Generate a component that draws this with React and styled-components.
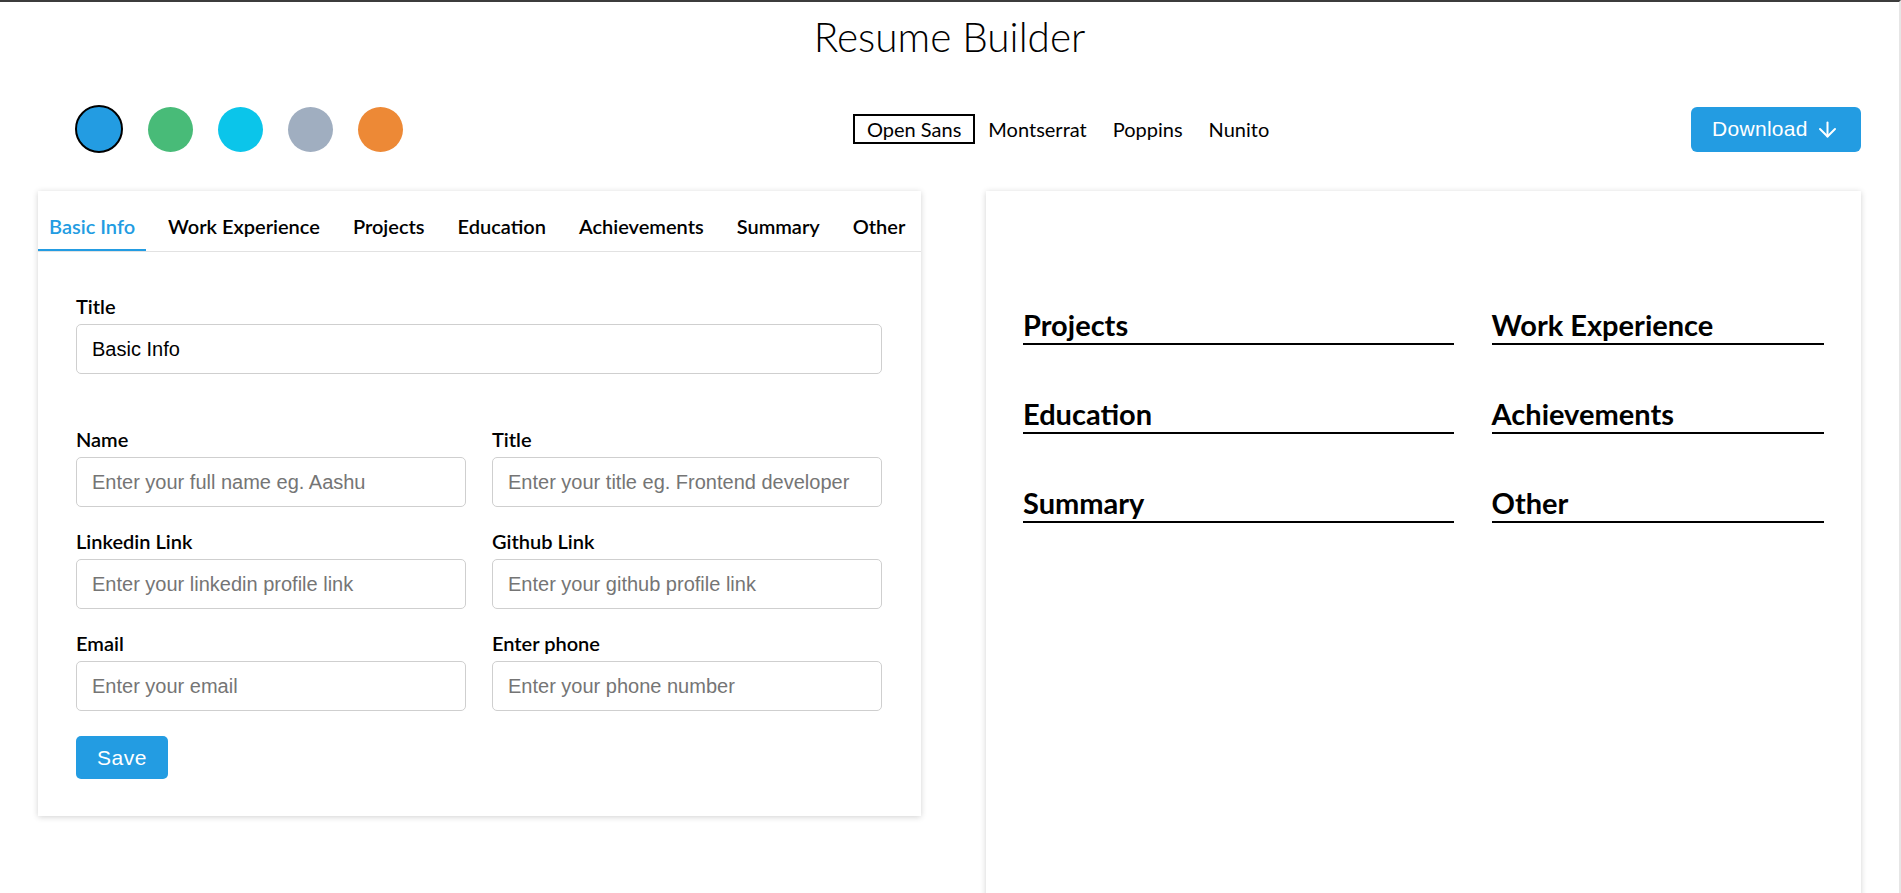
import React from "react";
import styled, { createGlobalStyle } from "styled-components";

const GlobalStyle = createGlobalStyle`
  html { scrollbar-width: none; }
  html::-webkit-scrollbar { display: none; }
  body {
    margin: 0;
    font-family: Lato, "Open Sans", sans-serif;
    color: #000;
    background: #fff;
  }
  * { box-sizing: border-box; }
`;

const BLUE = "#239ce2";

const Page = styled.div`
  border-top: 2px solid #3c3c3c;
  border-right: 2px solid #e6e6e6;
  min-height: 891px;
`;

const Heading = styled.h1`
  margin: 0;
  padding-top: 8px;
  text-align: center;
  font-family: Lato, sans-serif;
  font-weight: 300;
  font-size: 40.5px;
  line-height: 54px;
`;

const Toolbar = styled.div`
  display: flex;
  align-items: center;
  margin-top: 41px;
  padding: 0 38px 0 75px;
`;

const Swatches = styled.div`
  display: flex;
  align-items: center;
  gap: 25px;
`;

const Swatch = styled.span`
  display: block;
  width: ${(p) => (p.$active ? "48px" : "45px")};
  height: ${(p) => (p.$active ? "48px" : "45px")};
  border-radius: 50%;
  background: ${(p) => p.$color};
  border: ${(p) => (p.$active ? "2px solid #000" : "none")};
`;

const FontList = styled.div`
  display: flex;
  align-items: center;
  margin-left: 450px;
`;

const FontOption = styled.span`
  display: block;
  padding: 0 ${(p) => (p.$active ? "12px" : "11px")};
  border: 2px solid ${(p) => (p.$active ? "#000" : "transparent")};
  font-family: Lato, sans-serif;
  font-size: 20px;
  line-height: 26px;
`;

const DownloadButton = styled.button`
  margin-left: auto;
  display: flex;
  align-items: center;
  gap: 10px;
  height: 45px;
  width: 170px;
  padding: 0 0 0 21px;
  border: none;
  border-radius: 6px;
  background: ${BLUE};
  color: #fff;
  font-family: "Liberation Sans", Arial, sans-serif;
  font-size: 21px;
  letter-spacing: 0.3px;
`;

const Main = styled.div`
  display: grid;
  grid-template-columns: 883px 875px;
  justify-content: space-between;
  align-items: start;
  margin-top: 38px;
  padding: 0 38px 0 38px;
`;

const Card = styled.div`
  background: #fff;
  box-shadow: 0 1px 6px rgba(0, 0, 0, 0.18);
`;

const TabList = styled.div`
  display: flex;
  gap: 11px;
  border-bottom: 1px solid #e2e2e2;
`;

const Tab = styled.div`
  height: 60px;
  padding: 12px 11px 0;
  display: flex;
  align-items: center;
  border-bottom: 2px solid ${(p) => (p.$active ? BLUE : "transparent")};
  color: ${(p) => (p.$active ? BLUE : "#000")};
  font-size: 20px;
  font-weight: 600;
  white-space: nowrap;
`;

const FormBody = styled.div`
  padding: 42px 39px 37px 38px;
`;

const Field = styled.div`
  display: flex;
  flex-direction: column;
`;

const Label = styled.label`
  font-size: 20px;
  font-weight: 600;
  line-height: 24px;
  margin-bottom: 6px;
`;

const Input = styled.input`
  height: 50px;
  width: 100%;
  padding: 0 15px;
  border: 1px solid #cfcfcf;
  border-radius: 5px;
  font-family: "Liberation Sans", Arial, sans-serif;
  font-size: 20px;
  color: #000;
  outline: none;
  &::placeholder { color: #757575; }
`;

const FieldGrid = styled.div`
  display: grid;
  grid-template-columns: 1fr 1fr;
  column-gap: 26px;
  row-gap: 22px;
  margin-top: 53px;
`;

const SaveButton = styled.button`
  margin-top: 25px;
  height: 43px;
  padding: 0 21px;
  border: none;
  border-radius: 5px;
  background: ${BLUE};
  color: #fff;
  font-family: "Liberation Sans", Arial, sans-serif;
  font-size: 21px;
  letter-spacing: 0.5px;
`;

const Preview = styled(Card)`
  min-height: 1150px;
  padding: 117px 37px 40px 37px;
`;

const SectionGrid = styled.div`
  display: grid;
  grid-template-columns: 430fr 332fr;
  column-gap: 38px;
  row-gap: 52px;
`;

const SectionTitle = styled.div`
  font-size: 29px;
  font-weight: 700;
  line-height: 34px;
  padding-bottom: 1px;
  border-bottom: 2px solid #000;
`;

const ArrowDown = () => (
  <svg width="19" height="17" viewBox="0 0 19 17" fill="none" stroke="#fff" strokeWidth="2" strokeLinecap="round" strokeLinejoin="round">
    <path d="M9.5 1.5v14" />
    <path d="M2 8l7.5 7.5L17 8" />
  </svg>
);

const colors = ["#239ce2", "#48bb78", "#0bc5ea", "#a0aec0", "#ed8936"];
const fonts = ["Open Sans", "Montserrat", "Poppins", "Nunito"];
const tabs = ["Basic Info", "Work Experience", "Projects", "Education", "Achievements", "Summary", "Other"];
const fields = [
  ["Name", "Enter your full name eg. Aashu"],
  ["Title", "Enter your title eg. Frontend developer"],
  ["Linkedin Link", "Enter your linkedin profile link"],
  ["Github Link", "Enter your github profile link"],
  ["Email", "Enter your email"],
  ["Enter phone", "Enter your phone number"],
];
const sections = ["Projects", "Work Experience", "Education", "Achievements", "Summary", "Other"];

export default function App() {
  return (
    <Page>
      <GlobalStyle />
      <Heading>Resume Builder</Heading>
      <Toolbar>
        <Swatches>
          {colors.map((c, i) => (
            <Swatch key={c} $color={c} $active={i === 0} />
          ))}
        </Swatches>
        <FontList>
          {fonts.map((f, i) => (
            <FontOption key={f} $active={i === 0}>{f}</FontOption>
          ))}
        </FontList>
        <DownloadButton>
          Download <ArrowDown />
        </DownloadButton>
      </Toolbar>
      <Main>
        <Card>
          <TabList>
            {tabs.map((t, i) => (
              <Tab key={t} $active={i === 0}>{t}</Tab>
            ))}
          </TabList>
          <FormBody>
            <Field>
              <Label>Title</Label>
              <Input defaultValue="Basic Info" />
            </Field>
            <FieldGrid>
              {fields.map(([l, p]) => (
                <Field key={l}>
                  <Label>{l}</Label>
                  <Input placeholder={p} />
                </Field>
              ))}
            </FieldGrid>
            <SaveButton>Save</SaveButton>
          </FormBody>
        </Card>
        <Preview>
          <SectionGrid>
            {sections.map((s) => (
              <SectionTitle key={s}>{s}</SectionTitle>
            ))}
          </SectionGrid>
        </Preview>
      </Main>
    </Page>
  );
}
